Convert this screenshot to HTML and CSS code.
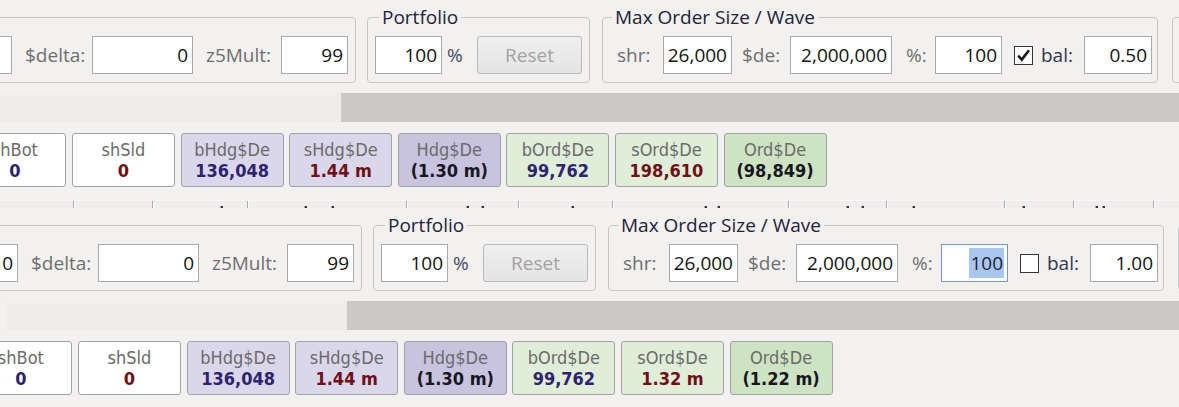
FILE: index.html
```html
<!DOCTYPE html>
<html>
<head>
<meta charset="utf-8">
<title>Order panel</title>
<link rel="stylesheet" href="styles.css">
</head>
<body>
<div class="screen">

  <section class="panel">
    <div class="groups">
      <fieldset class="grp grp-plain grp-first">
        <div class="row">
          <div class="tb w-part"></div>
          <span class="lb lb-delta">$delta:</span>
          <div class="tb w-delta">0</div>
          <span class="lb lb-mult">z5Mult:</span>
          <div class="tb w-mult">99</div>
        </div>
      </fieldset>
      <fieldset class="grp grp-port">
        <legend class="lg lg-port">Portfolio</legend>
        <div class="row">
          <div class="tb w-pct">100</div>
          <span class="lb lb-unit">%</span>
          <div class="btn">Reset</div>
        </div>
      </fieldset>
      <fieldset class="grp grp-max">
        <legend class="lg lg-max">Max Order Size / Wave</legend>
        <div class="row">
          <span class="lb lb-shr">shr:</span>
          <div class="tb w-shr">26,000</div>
          <span class="lb lb-de">$de:</span>
          <div class="tb w-de">2,000,000</div>
          <span class="lb lb-pc">%:</span>
          <div class="tb w-pc">100</div>
          <div class="cb"><svg width="17" height="17" viewBox="0 0 17 17"><path d="M3.2 8.6 L6.8 12.6 L14 3.2" fill="none" stroke="#1a1a1a" stroke-width="2.6"/></svg></div>
          <span class="lb lb-bal">bal:</span>
          <div class="tb w-bal">0.50</div>
        </div>
      </fieldset>
      <fieldset class="grp grp-plain grp-next"></fieldset>
    </div>

    <div class="bar"><div class="bar-l"></div><div class="bar-r"></div></div>

    <div class="tiles">
      <div class="tile t-white"><span class="k">shBot</span><span class="v c-buy">0</span></div>
      <div class="tile t-white"><span class="k">shSld</span><span class="v c-sell">0</span></div>
      <div class="tile t-hdg"><span class="k">bHdg$De</span><span class="v c-buy">136,048</span></div>
      <div class="tile t-hdg"><span class="k">sHdg$De</span><span class="v c-sell">1.44 m</span></div>
      <div class="tile t-hdg2"><span class="k">Hdg$De</span><span class="v c-net">(1.30 m)</span></div>
      <div class="tile t-ord"><span class="k">bOrd$De</span><span class="v c-buy">99,762</span></div>
      <div class="tile t-ord"><span class="k">sOrd$De</span><span class="v c-sell">198,610</span></div>
      <div class="tile t-ord2"><span class="k">Ord$De</span><span class="v c-net">(98,849)</span></div>
    </div>

    <div class="strip">
      <span class="col"></span>
      <span class="col"></span>
      <span class="col"><i class="dot d68"></i></span>
      <span class="col"><i class="dot d57"></i><i class="dot d25"></i></span>
      <span class="col"><i class="dot d60"></i><i class="dot d13"></i></span>
      <span class="col"><i class="dot d53"></i></span>
      <span class="col"><i class="dot d92"></i><i class="dot d11"></i></span>
      <span class="col"><i class="dot d58"></i><i class="dot d13"></i></span>
      <span class="col"><i class="dot d26"></i></span>
      <span class="col"><i class="dot d18"></i></span>
      <span class="col"><i class="dot d22"></i><i class="dot d5"></i></span>
      <span class="col col-last"></span>
    </div>
  </section>

  <section class="panel panel-b">
    <div class="groups">
      <fieldset class="grp grp-plain grp-first">
        <div class="row">
          <div class="tb w-part">0</div>
          <span class="lb lb-delta">$delta:</span>
          <div class="tb w-delta">0</div>
          <span class="lb lb-mult">z5Mult:</span>
          <div class="tb w-mult">99</div>
        </div>
      </fieldset>
      <fieldset class="grp grp-port">
        <legend class="lg lg-port">Portfolio</legend>
        <div class="row">
          <div class="tb w-pct">100</div>
          <span class="lb lb-unit">%</span>
          <div class="btn">Reset</div>
        </div>
      </fieldset>
      <fieldset class="grp grp-max">
        <legend class="lg lg-max">Max Order Size / Wave</legend>
        <div class="row">
          <span class="lb lb-shr">shr:</span>
          <div class="tb w-shr">26,000</div>
          <span class="lb lb-de">$de:</span>
          <div class="tb w-de">2,000,000</div>
          <span class="lb lb-pc">%:</span>
          <div class="tb w-pc tb-focus"><span class="sel">100</span></div>
          <div class="cb"></div>
          <span class="lb lb-bal">bal:</span>
          <div class="tb w-bal">1.00</div>
        </div>
      </fieldset>
      <fieldset class="grp grp-plain grp-next"></fieldset>
    </div>

    <div class="bar"><div class="bar-l"></div><div class="bar-r"></div></div>

    <div class="tiles">
      <div class="tile t-white"><span class="k">shBot</span><span class="v c-buy">0</span></div>
      <div class="tile t-white"><span class="k">shSld</span><span class="v c-sell">0</span></div>
      <div class="tile t-hdg"><span class="k">bHdg$De</span><span class="v c-buy">136,048</span></div>
      <div class="tile t-hdg"><span class="k">sHdg$De</span><span class="v c-sell">1.44 m</span></div>
      <div class="tile t-hdg2"><span class="k">Hdg$De</span><span class="v c-net">(1.30 m)</span></div>
      <div class="tile t-ord"><span class="k">bOrd$De</span><span class="v c-buy">99,762</span></div>
      <div class="tile t-ord"><span class="k">sOrd$De</span><span class="v c-sell">1.32 m</span></div>
      <div class="tile t-ord2"><span class="k">Ord$De</span><span class="v c-net">(1.22 m)</span></div>
    </div>
  </section>

</div>
</body>
</html>
```

FILE: styles.css
```css
* { box-sizing: border-box; }

html, body { margin: 0; padding: 0; }

body {
  width: 1179px;
  height: 407px;
  overflow: hidden;
  background: #f2f1ef;
  font-family: "Open Sans", "Noto Sans", sans-serif;
  font-size: 19px;
  color: #161616;
}

.screen { display: flex; flex-direction: column; }

.panel {
  height: 208px;
  flex-shrink: 0;
  overflow: hidden;
  display: flex;
  flex-direction: column;
  background: #f2f1ef;
}

.panel-b { padding-left: 6px; }

/* ---------- group boxes ---------- */
.groups {
  display: flex;
  align-items: flex-start;
  padding-top: 8px;
  height: 84px;
  flex-shrink: 0;
}

.grp {
  flex-shrink: 0;
  margin: 0;
  min-width: 0;
  border: 1px solid #c6c6c6;
  border-radius: 4px;
  padding: 10px 7px 8px 7px;
}

.grp-plain { margin-top: 9px; padding-top: 18px; }

.grp-first { margin-left: -49px; padding-left: 8px; }
.grp-port { margin-left: 11px; }
.grp-max { margin-left: 12px; padding-left: 14px; padding-right: 5px; }
.grp-next { margin-left: 14px; width: 80px; height: 66px; }

.lg {
  padding: 0 3px;
  height: 18px;
  line-height: 18px;
  color: #22223a;
  white-space: nowrap;
}
.lg-port { margin-left: 4px; }
.lg-max { margin-left: -5px; }

.row {
  display: flex;
  align-items: center;
  height: 38px;
}

/* ---------- labels ---------- */
.lb {
  flex-shrink: 0;
  white-space: nowrap;
  color: #6e6e6e;
  line-height: 36px;
}
.lb-delta { margin-left: 13px; width: 62px; }
.lb-mult { margin-left: 13px; width: 70px; }
.lb-unit { margin-left: 5px; width: 18px; color: #4a4668; }
.lb-shr { width: 41px; }
.lb-de { margin-left: 10px; width: 43px; }
.lb-pc { margin-left: 14px; width: 24px; }
.lb-bal { margin-left: 8px; width: 38px; color: #35344e; }

/* ---------- text boxes ---------- */
.tb {
  flex-shrink: 0;
  height: 38px;
  border: 1px solid #a9a9a9;
  background: #ffffff;
  text-align: right;
  padding-right: 4px;
  line-height: 36px;
  white-space: nowrap;
  overflow: hidden;
  color: #141414;
}
.w-part { width: 52px; }
.w-delta { margin-left: 5px; width: 101px; }
.w-mult { margin-left: 5px; width: 67px; }
.w-pct { width: 67px; }
.w-shr { margin-left: 5px; width: 69px; }
.w-de { margin-left: 5px; width: 102px; }
.w-pc { margin-left: 5px; width: 67px; }
.w-bal { margin-left: 5px; width: 68px; }

.tb-focus { border-color: #7096d2; padding-right: 3px; }
.sel { background: #a9c6ec; color: #1c1c3c; padding: 2px 1px; }

/* ---------- button ---------- */
.btn {
  flex-shrink: 0;
  margin-left: 12px;
  width: 105px;
  height: 38px;
  border: 1px solid #b9b9b9;
  border-radius: 3px;
  background: linear-gradient(#efefef, #e4e4e4);
  color: #a2a2a2;
  text-align: center;
  line-height: 36px;
}

/* ---------- checkbox ---------- */
.cb {
  flex-shrink: 0;
  margin-left: 12px;
  width: 19px;
  height: 19px;
  border: 1px solid #333333;
  background: #ffffff;
  display: flex;
  align-items: center;
  justify-content: center;
}

/* ---------- bar ---------- */
.bar {
  flex-shrink: 0;
  display: flex;
  margin-top: 9px;
  height: 29px;
}
.bar-l { width: 341px; background: #eeedeb; }
.bar-r { flex: 1; background: #cac9c5; }

/* ---------- tiles ---------- */
.tiles {
  flex-shrink: 0;
  display: flex;
  gap: 5.6px;
  margin-top: 11px;
  margin-left: -36.6px;
  height: 54px;
}

.tile {
  flex-shrink: 0;
  width: 103px;
  height: 54px;
  border: 1px solid #a2a2a2;
  border-radius: 3px;
  display: flex;
  flex-direction: column;
  align-items: center;
  justify-content: center;
  font-family: "DejaVu Sans Condensed", "DejaVu Sans", sans-serif;
  font-stretch: condensed;
  font-size: 18px;
  line-height: 21px;
  white-space: nowrap;
}
.tile .k { color: #6b6b6b; }
.tile .v { font-weight: bold; }

.t-white { background: #ffffff; }
.t-hdg { background: #dbd7eb; }
.t-hdg2 { background: #c8c3df; }
.t-ord { background: #e0edd8; }
.t-ord2 { background: #cee3c3; }

.c-buy { color: #2d236e; }
.c-sell { color: #6e1016; }
.c-net { color: #17171f; }

/* ---------- grid header strip ---------- */
.strip {
  flex-shrink: 0;
  margin-top: 13px;
  height: 9px;
  display: grid;
  grid-template-columns: 74px 79px 95px 159px 112px 94px 176px 98px 118px 69px 80px 1fr;
  background: #efeeec;
  border-top: 1px solid #f7f7f6;
}
.col {
  display: flex;
  align-items: flex-end;
  border-right: 1px solid #a9a9a9;
  box-shadow: 1px 0 0 #ffffff;
}
.col-last { border-right: 0; box-shadow: none; }

.dot {
  flex-shrink: 0;
  width: 2px;
  height: 3px;
  background: #2c2c6c;
  box-shadow: -1px 0 0 #d0a060;
}
.d5 { margin-left: 5px; }
.d11 { margin-left: 11px; }
.d13 { margin-left: 13px; }
.d18 { margin-left: 18px; }
.d22 { margin-left: 22px; }
.d25 { margin-left: 25px; }
.d26 { margin-left: 26px; }
.d53 { margin-left: 53px; }
.d57 { margin-left: 57px; }
.d58 { margin-left: 58px; }
.d60 { margin-left: 60px; }
.d68 { margin-left: 68px; }
.d92 { margin-left: 92px; }
```
